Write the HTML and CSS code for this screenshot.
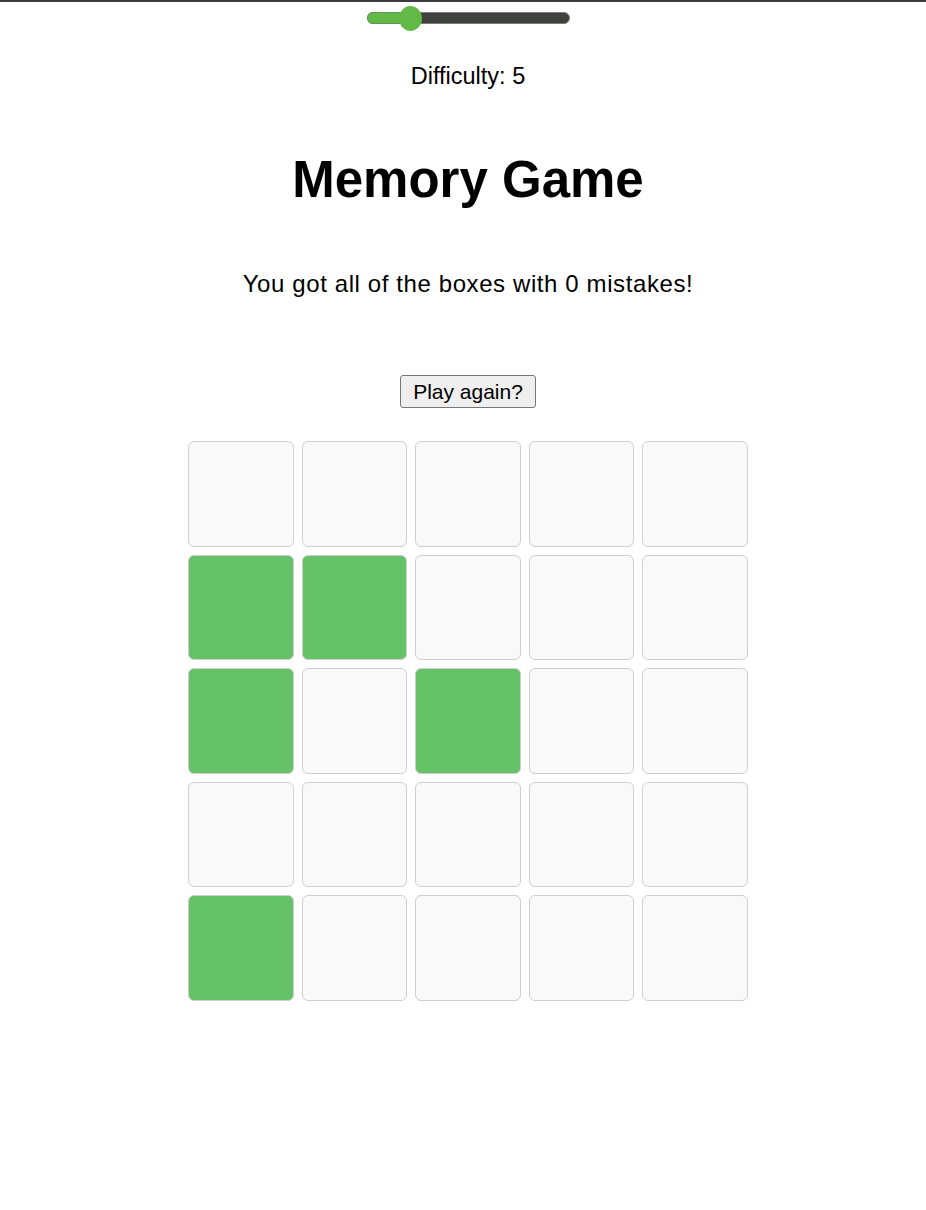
FILE: index.html
```html
<!DOCTYPE html>
<html>
<head>
<meta charset="utf-8">
<link rel="stylesheet" href="styles.css">
</head>
<body>
<div class="page">
  <div class="slider">
    <div class="track">
      <div class="fill"></div>
      <div class="thumb"></div>
    </div>
  </div>
  <p class="difficulty">Difficulty: 5</p>
  <h1 class="title">Memory Game</h1>
  <p class="message">You got all of the boxes with 0 mistakes!</p>
  <button class="again">Play again?</button>
  <div class="grid">
    <div class="cell"></div><div class="cell"></div><div class="cell"></div><div class="cell"></div><div class="cell"></div>
    <div class="cell on"></div><div class="cell on"></div><div class="cell"></div><div class="cell"></div><div class="cell"></div>
    <div class="cell on"></div><div class="cell"></div><div class="cell on"></div><div class="cell"></div><div class="cell"></div>
    <div class="cell"></div><div class="cell"></div><div class="cell"></div><div class="cell"></div><div class="cell"></div>
    <div class="cell on"></div><div class="cell"></div><div class="cell"></div><div class="cell"></div><div class="cell"></div>
  </div>
</div>
</body>
</html>
```
FILE: styles.css
```css
html, body {
  margin: 0;
  padding: 0;
  background: #ffffff;
}
body {
  border-top: 2px solid #3b3b3b;
  font-family: "Liberation Sans", Arial, sans-serif;
  color: #000;
}
.page {
  display: flex;
  flex-direction: column;
  align-items: center;
  padding-left: 10px;
}
.slider {
  margin-top: 10px;
  width: 203px;
}
.track {
  position: relative;
  height: 12px;
  border-radius: 6px;
  background: #3f413d;
  border: 1px solid #7a7a7a;
  box-sizing: border-box;
}
.fill {
  position: absolute;
  left: -1px;
  top: -1px;
  width: 42px;
  height: 12px;
  box-sizing: border-box;
  border-radius: 6px 0 0 6px;
  background: #62b946;
  border: 1px dotted #6a6a6a;
  border-right: none;
}
.thumb {
  position: absolute;
  left: 31px;
  top: -7px;
  width: 23px;
  height: 25px;
  border-radius: 50%;
  background: #62b946;
}
.difficulty {
  margin: 38px 0 0;
  font-size: 23.5px;
  line-height: 28px;
}
.title {
  margin: 60px 0 0;
  font-size: 51px;
  line-height: 59px;
  font-weight: bold;
}
.message {
  margin: 61px 0 0;
  font-size: 24px;
  line-height: 28px;
  letter-spacing: 0.6px;
}
.again {
  margin-top: 77px;
  width: 136px;
  height: 33px;
  font-family: "Liberation Sans", Arial, sans-serif;
  font-size: 21px;
  color: #000;
  background: #efefef;
  border: 1px solid #767676;
  border-radius: 3px;
  padding: 0;
}
.grid {
  margin-top: 33px;
  display: grid;
  grid-template-columns: repeat(5, 105.6px);
  grid-auto-rows: 105.6px;
  gap: 8px;
}
.cell {
  background: #f9f9f9;
  border: 1px solid #cfcfcf;
  border-radius: 6px;
  box-sizing: border-box;
}
.cell.on {
  background: #65c266;
}
```
